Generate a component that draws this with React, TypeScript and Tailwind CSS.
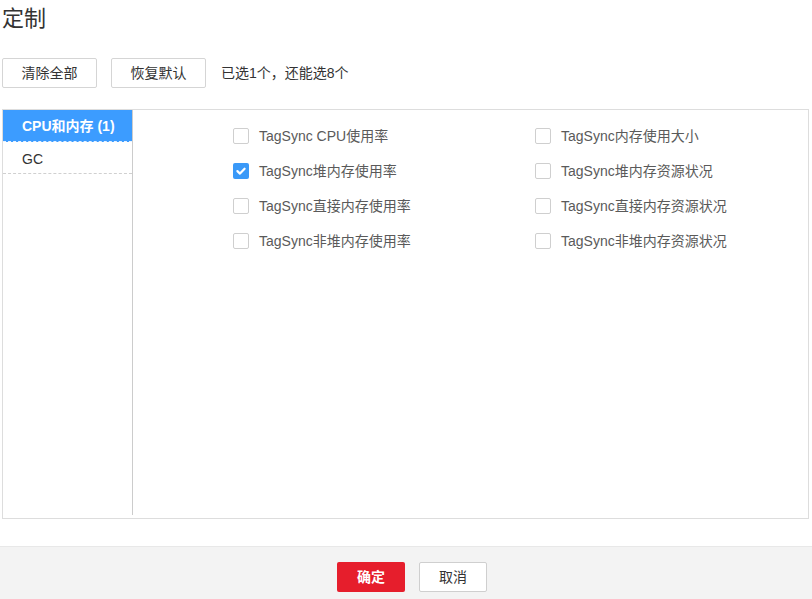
import { useState } from "react";

const font = {
  fontFamily: '"Liberation Sans", "Noto Sans CJK SC", sans-serif',
};

const items = [
  "TagSync CPU使用率",
  "TagSync内存使用大小",
  "TagSync堆内存使用率",
  "TagSync堆内存资源状况",
  "TagSync直接内存使用率",
  "TagSync直接内存资源状况",
  "TagSync非堆内存使用率",
  "TagSync非堆内存资源状况",
];

function Box({ checked }: { checked: boolean }) {
  return checked ? (
    <span className="flex h-4 w-4 shrink-0 items-center justify-center rounded-[2px] bg-[#3a99f8]">
      <svg viewBox="0 0 12 12" className="h-3 w-3" fill="none" stroke="#fff" strokeWidth="2.2" strokeLinecap="round" strokeLinejoin="round">
        <path d="M2.4 6.1l2.6 2.5 4.6-4.9" />
      </svg>
    </span>
  ) : (
    <span className="h-4 w-4 shrink-0 rounded-[2px] border border-[#cfcfcf] bg-white" />
  );
}

export default function App() {
  const [sel, setSel] = useState<string[]>(["TagSync堆内存使用率"]);
  const [tab, setTab] = useState(0);

  function toggle(k: string) {
    setSel((s) => (s.includes(k) ? s.filter((x) => x !== k) : [...s, k]));
  }

  return (
    <div className="flex h-[599px] w-[812px] flex-col bg-white text-[#333]" style={font}>
      <div className="px-[2px]">
        <h1 className="pt-[4px] text-[22px] leading-[30px] text-[#333]">定制</h1>

        <div className="mt-[24px] flex items-center">
          <button className="h-[30px] w-[95px] rounded-[2px] border border-[#d5d5d5] bg-white text-sm text-[#333]">
            清除全部
          </button>
          <button className="ml-[14px] h-[30px] w-[95px] rounded-[2px] border border-[#d5d5d5] bg-white text-sm text-[#333]">
            恢复默认
          </button>
          <span className="ml-[15px] text-sm text-[#333]">已选1个，还能选8个</span>
        </div>

        <div className="mt-[21px] flex h-[410px] w-[807px] border border-[#dddddd]">
          <div className="mb-[3px] flex w-[130px] shrink-0 flex-col border-r border-[#cccccc]">
            {["CPU和内存 (1)", "GC"].map((t, i) => (
              <div
                key={t}
                onClick={() => setTab(i)}
                className={
                  "flex h-[32px] cursor-pointer items-center border-b border-dashed border-[#d0d0d0] pl-[19px] text-sm " +
                  (tab === i
                    ? "border-[#e8f2ff] bg-[#3c9cff] font-semibold text-white"
                    : "pt-[2px] text-[#333]")
                }
              >
                {t}
              </div>
            ))}
          </div>

          <div className="grid flex-1 grid-cols-[302px_1fr] content-start pl-[100px] pt-[8px]">
            {items.map((k) => (
              <label
                key={k}
                onClick={() => toggle(k)}
                className="flex h-[35px] cursor-pointer items-center gap-[10px] text-sm text-[#5a5a5a]"
              >
                <Box checked={sel.includes(k)} />
                <span>{k}</span>
              </label>
            ))}
          </div>
        </div>
      </div>

      <div className="mt-auto flex h-[53px] items-start justify-center gap-[14px] border-t border-[#e8e8e8] bg-[#f3f3f3] pl-[12px] pt-[15px]">
        <button className="h-[30px] w-[68px] rounded-[2px] bg-[#e61e2c] text-sm font-semibold text-white">
          确定
        </button>
        <button className="h-[30px] w-[68px] rounded-[2px] border border-[#cfcfcf] bg-white text-sm text-[#333]">
          取消
        </button>
      </div>
    </div>
  );
}
